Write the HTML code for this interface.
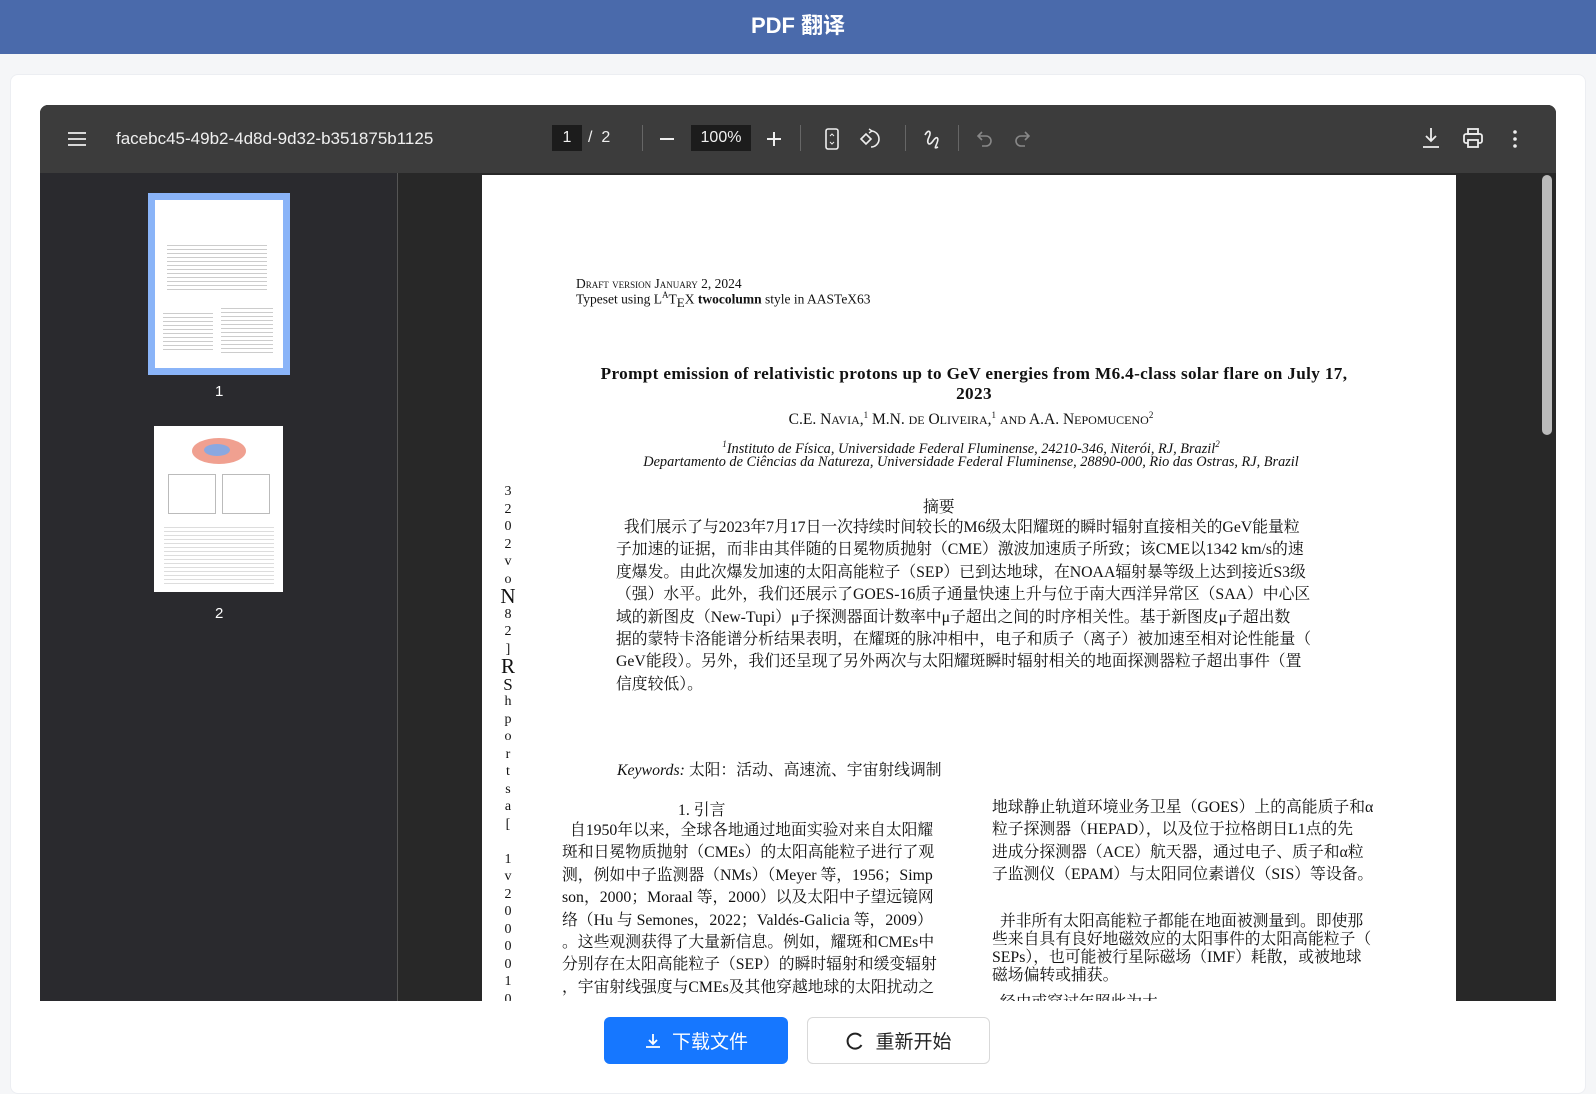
<!DOCTYPE html>
<html><head><meta charset="utf-8"><style>
*{margin:0;padding:0;box-sizing:border-box}
body{width:1596px;height:1080px;overflow:hidden;background:#f5f6f8;font-family:"Liberation Sans","Noto Sans CJK SC",sans-serif;position:relative}
.hdr{position:absolute;left:0;top:0;width:1596px;height:54px;background:#4a6aab;color:#fff;font-weight:bold;font-size:22px;text-align:center;line-height:52px}
.card{position:absolute;left:10px;top:74px;width:1576px;height:1020px;background:#fff;border:1px solid #eceef2;border-radius:8px}
.viewer{position:absolute;left:40px;top:105px;width:1516px;height:896px;background:#282828;border-radius:8px 8px 0 0;overflow:hidden}
.tb{position:absolute;left:0;top:0;width:1516px;height:68px;background:#3c3c3c;color:#f0f0f0}
.side{position:absolute;left:0;top:68px;width:358px;height:828px;background:#2a2a2e;border-right:1px solid #555}
.page{position:absolute;left:442px;top:70px;width:974px;height:830px;background:#fff}
.t{position:absolute;white-space:nowrap;color:#111;font-family:"Liberation Serif","Noto Serif CJK SC",serif}
.z{font-size:15.8px}
.sep{position:absolute;top:20px;width:1px;height:26px;background:#666}
.btn{position:absolute;top:1017px;height:47px;border-radius:6px;font-size:19px;display:flex;align-items:center;justify-content:center;gap:10px}
.vt{position:absolute;left:18px;top:308px;width:16px;font-size:14px;line-height:17.5px;text-align:center;color:#111;font-family:"Liberation Serif",serif}
.vt div{height:17.5px}
</style></head><body>
<div class="hdr">PDF 翻译</div>
<div class="card"></div>
<div class="viewer">
 <div class="tb">
  <svg style="position:absolute;left:28px;top:27px" width="18" height="14"><path d="M0 1h18M0 7h18M0 13h18" stroke="#eee" stroke-width="1.8"/></svg>
  <div style="position:absolute;left:76px;top:24px;font-size:17px">facebc45-49b2-4d8d-9d32-b351875b1125</div>
  <div style="position:absolute;left:512px;top:20px;width:30px;height:26px;background:#1c1c1c;text-align:center;line-height:26px;font-size:16px">1</div>
  <div style="position:absolute;left:548px;top:24px;font-size:16px">/&nbsp;&nbsp;2</div>
  <div class="sep" style="left:602px"></div>
  <div style="position:absolute;left:620px;top:33px;width:14px;height:2px;background:#eee"></div>
  <div style="position:absolute;left:651px;top:20px;width:60px;height:26px;background:#1c1c1c;text-align:center;line-height:26px;font-size:16px">100%</div>
  <svg style="position:absolute;left:727px;top:27px" width="14" height="14"><path d="M7 0v14M0 7h14" stroke="#eee" stroke-width="2"/></svg>
  <div class="sep" style="left:760px"></div>
  <svg style="position:absolute;left:785px;top:23px" width="14" height="22"><rect x="1" y="1" width="12" height="20" rx="2" fill="none" stroke="#eee" stroke-width="1.6"/><path d="M5 8l2-2 2 2M5 14l2 2 2-2" stroke="#eee" fill="none"/></svg>
  <svg style="position:absolute;left:819px;top:22px" width="24" height="24"><path d="M2 12l5-5 5 5-5 5z" fill="none" stroke="#eee" stroke-width="1.6"/><path d="M12 4a8 8 0 1 1 0 16" fill="none" stroke="#eee" stroke-width="1.6"/><path d="M10 2l3 2-3 2" fill="none" stroke="#eee" stroke-width="1.4"/></svg>
  <div class="sep" style="left:865px"></div>
  <svg style="position:absolute;left:882px;top:22px" width="22" height="24"><path d="M3 8c3-6 7-4 4 2s0 10 4 4 6-3 4 2-3 6 1 4" fill="none" stroke="#eee" stroke-width="1.6"/></svg>
  <div class="sep" style="left:918px"></div>
  <svg style="position:absolute;left:936px;top:24px" width="18" height="20"><path d="M6 3L2 7l4 4M2 7h8a5 5 0 0 1 0 10H6" fill="none" stroke="#888" stroke-width="1.6"/></svg>
  <svg style="position:absolute;left:973px;top:24px" width="18" height="20"><path d="M12 3l4 4-4 4M16 7H8a5 5 0 0 0 0 10h4" fill="none" stroke="#888" stroke-width="1.6"/></svg>
  <svg style="position:absolute;left:1382px;top:22px" width="18" height="22"><path d="M9 1v13M4 9l5 5 5-5M1 20h16" fill="none" stroke="#eee" stroke-width="1.8"/></svg>
  <svg style="position:absolute;left:1422px;top:22px" width="22" height="22"><rect x="6" y="2" width="10" height="5" fill="none" stroke="#eee" stroke-width="1.8"/><rect x="2" y="7" width="18" height="9" rx="2" fill="none" stroke="#eee" stroke-width="1.8"/><rect x="6" y="13" width="10" height="7" fill="#3c3c3c" stroke="#eee" stroke-width="1.8"/></svg>
  <svg style="position:absolute;left:1472px;top:24px" width="6" height="20"><circle cx="3" cy="3" r="1.8" fill="#eee"/><circle cx="3" cy="10" r="1.8" fill="#eee"/><circle cx="3" cy="17" r="1.8" fill="#eee"/></svg>
 </div>
 <div class="side">
  <div style="position:absolute;left:108px;top:20px;width:142px;height:182px;background:#8ab4f8;padding:7px"><div style="width:100%;height:100%;background:#fff;position:relative">
   <div style="position:absolute;left:12px;top:42px;width:100px;height:50px;background:repeating-linear-gradient(#fff 0 3px,#ccc 3px 4px)"></div>
   <div style="position:absolute;left:8px;top:110px;width:50px;height:40px;background:repeating-linear-gradient(#fff 0 3px,#ccc 3px 4px)"></div>
   <div style="position:absolute;left:66px;top:105px;width:52px;height:50px;background:repeating-linear-gradient(#fff 0 3px,#ccc 3px 4px)"></div>
  </div></div>
  <div style="position:absolute;left:175px;top:210px;color:#fff;font-size:15px">1</div>
  <div style="position:absolute;left:114px;top:253px;width:129px;height:166px;background:#fff">
   <div style="position:absolute;left:38px;top:12px;width:54px;height:26px;border-radius:50%;background:#f0a090"><div style="margin:6px 12px;width:26px;height:12px;border-radius:50%;background:#8aa8e0"></div></div>
   <div style="position:absolute;left:14px;top:48px;width:48px;height:40px;border:1px solid #bbb"></div>
   <div style="position:absolute;left:68px;top:48px;width:48px;height:40px;border:1px solid #bbb"></div>
   <div style="position:absolute;left:10px;top:98px;width:110px;height:60px;background:repeating-linear-gradient(#fff 0 3px,#ddd 3px 4px)"></div>
  </div>
  <div style="position:absolute;left:175px;top:432px;color:#fff;font-size:15px">2</div>
 </div>
 <div style="position:absolute;left:1502px;top:70px;width:10px;height:260px;background:#bbb;border-radius:5px"></div>
 <div class="page">
  <div class="t" style="left:94px;top:101px;font-size:13.5px;font-variant:small-caps">Draft version January 2, 2024</div>
  <div class="t" style="left:94px;top:115px;font-size:13.5px">Typeset using L<sup style="font-size:9px">A</sup>T<sub style="font-size:13px">E</sub>X <b>twocolumn</b> style in AASTeX63</div>
  <div class="t" style="left:0;top:189px;width:974px;text-align:center;font-size:17.2px;letter-spacing:0.35px;font-weight:bold;line-height:20px;padding-left:10px">Prompt emission of relativistic protons up to GeV energies from M6.4-class solar flare on July 17,<br>2023</div>
  <div class="t" style="left:0;top:235px;width:974px;text-align:center;font-size:15.5px;padding-left:4px">C.E. N<span style="font-size:12px">AVIA</span>,<sup style="font-size:9px">1</sup> M.N. <span style="font-size:12px">DE</span> O<span style="font-size:12px">LIVEIRA</span>,<sup style="font-size:9px">1</sup> <span style="font-size:12px">AND</span> A.A. N<span style="font-size:12px">EPOMUCENO</span><sup style="font-size:9px">2</sup></div>
  <div class="t" style="left:0;top:264px;width:974px;text-align:center;font-size:14.3px;font-style:italic;padding-left:4px"><sup style="font-size:9px">1</sup>Instituto de Física, Universidade Federal Fluminense, 24210-346, Niterói, RJ, Brazil<sup style="font-size:9px">2</sup></div>
  <div class="t" style="left:0;top:279px;width:974px;text-align:center;font-size:14.3px;font-style:italic;padding-left:4px">Departamento de Ciências da Natureza, Universidade Federal Fluminense, 28890-000, Rio das Ostras, RJ, Brazil</div>
  <div class="t z" style="left:441px;top:319px">摘要</div>
  <div class="t z" style="left:134px;top:342px;line-height:22.4px">
   &nbsp;&nbsp;我们展示了与2023年7月17日一次持续时间较长的M6级太阳耀斑的瞬时辐射直接相关的GeV能量粒<br>子加速的证据，而非由其伴随的日冕物质抛射（CME）激波加速质子所致；该CME以1342 km/s的速<br>度爆发。由此次爆发加速的太阳高能粒子（SEP）已到达地球，在NOAA辐射暴等级上达到接近S3级<br>（强）水平。此外，我们还展示了GOES-16质子通量快速上升与位于南大西洋异常区（SAA）中心区<br>域的新图皮（New-Tupi）μ子探测器面计数率中μ子超出之间的时序相关性。基于新图皮μ子超出数<br>据的蒙特卡洛能谱分析结果表明，在耀斑的脉冲相中，电子和质子（离子）被加速至相对论性能量（<br>GeV能段）。另外，我们还呈现了另外两次与太阳耀斑瞬时辐射相关的地面探测器粒子超出事件（置<br>信度较低）。</div>
  <div class="t z" style="left:135px;top:582px"><i>Keywords:</i> 太阳：活动、高速流、宇宙射线调制</div>
  <div class="t z" style="left:196px;top:622px">1. 引言</div>
  <div class="t z" style="left:80px;top:645px;line-height:22.4px">&nbsp;&nbsp;自1950年以来，全球各地通过地面实验对来自太阳耀<br>斑和日冕物质抛射（CMEs）的太阳高能粒子进行了观<br>测，例如中子监测器（NMs）（Meyer 等，1956；Simp<br>son，2000；Moraal 等，2000）以及太阳中子望远镜网<br>络（Hu 与 Semones，2022；Valdés-Galicia 等，2009）<br>。这些观测获得了大量新信息。例如，耀斑和CMEs中<br>分别存在太阳高能粒子（SEP）的瞬时辐射和缓变辐射<br>，宇宙射线强度与CMEs及其他穿越地球的太阳扰动之</div>
  <div class="t z" style="left:510px;top:622px;line-height:22.4px">地球静止轨道环境业务卫星（GOES）上的高能质子和α<br>粒子探测器（HEPAD），以及位于拉格朗日L1点的先<br>进成分探测器（ACE）航天器，通过电子、质子和α粒<br>子监测仪（EPAM）与太阳同位素谱仪（SIS）等设备。</div>
  <div class="t z" style="left:510px;top:738px;line-height:18px">&nbsp;&nbsp;并非所有太阳高能粒子都能在地面被测量到。即使那<br>些来自具有良好地磁效应的太阳事件的太阳高能粒子（<br>SEPs），也可能被行星际磁场（IMF）耗散，或被地球<br>磁场偏转或捕获。</div>
  <div class="t z" style="left:510px;top:814px">&nbsp;&nbsp;经由或穿过年照此为太</div>
  <div class="vt"><div>3</div><div>2</div><div>0</div><div>2</div><div>v</div><div>o</div><div style="font-size:21px">N</div><div>8</div><div>2</div><div>]</div><div style="font-size:21px">R</div><div style="font-size:17px">S</div><div>h</div><div>p</div><div>o</div><div>r</div><div>t</div><div>s</div><div>a</div><div>[</div><div></div><div>1</div><div>v</div><div>2</div><div>0</div><div>0</div><div>0</div><div>0</div><div>1</div><div>0</div></div>
 </div>
</div>
<div class="btn" style="left:604px;width:184px;background:#1677ff;color:#fff"><svg width="18" height="18"><path d="M9 2v10M5 8l4 4 4-4M2 15h14" fill="none" stroke="#fff" stroke-width="1.8"/></svg>下载文件</div>
<div class="btn" style="left:807px;width:183px;background:#fff;border:1px solid #d9d9d9;color:#222"><svg width="20" height="20"><path d="M16 5.5A7.5 7.5 0 1 0 16.5 14" fill="none" stroke="#222" stroke-width="2"/></svg>重新开始</div>
</body></html>
